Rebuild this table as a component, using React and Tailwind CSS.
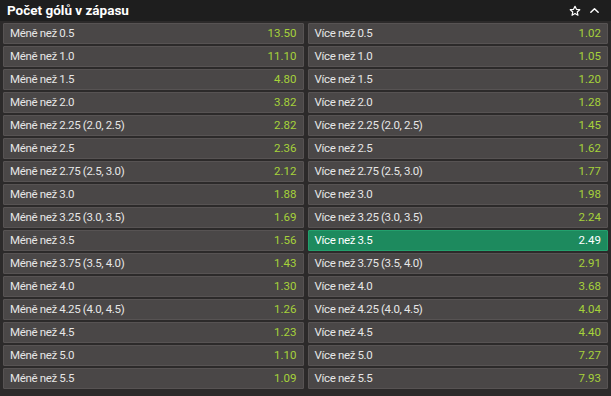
import React from "react";

const rows = [
  ["0.5", "13.50", "1.02"],
  ["1.0", "11.10", "1.05"],
  ["1.5", "4.80", "1.20"],
  ["2.0", "3.82", "1.28"],
  ["2.25 (2.0, 2.5)", "2.82", "1.45"],
  ["2.5", "2.36", "1.62"],
  ["2.75 (2.5, 3.0)", "2.12", "1.77"],
  ["3.0", "1.88", "1.98"],
  ["3.25 (3.0, 3.5)", "1.69", "2.24"],
  ["3.5", "1.56", "2.49"],
  ["3.75 (3.5, 4.0)", "1.43", "2.91"],
  ["4.0", "1.30", "3.68"],
  ["4.25 (4.0, 4.5)", "1.26", "4.04"],
  ["4.5", "1.23", "4.40"],
  ["5.0", "1.10", "7.27"],
  ["5.5", "1.09", "7.93"],
];

const Cell = ({ label, odd, active }) => (
  <div
    className={`flex h-[21px] items-center justify-between rounded-[1px] border px-[6px] text-[11.5px] ${
      active
        ? "border-[#23a06d] bg-[#1d8a5e] text-white"
        : "border-[#575353] bg-[#4a4747] text-[#e6e6e6]"
    }`}
  >
    <span className="tracking-[-0.35px]">{label}</span>
    <span className={active ? "text-white" : "text-[#a6d23a]"}>{odd}</span>
  </div>
);

export default function App() {
  return (
    <div
      className="flex h-[396px] w-[611px] flex-col bg-[#2c2a2a]"
      style={{ fontFamily: "Roboto, 'Liberation Sans', sans-serif" }}
    >
      <div className="flex h-[21px] items-center justify-between bg-[#1e1e1e] pl-[7px] pr-[11px] text-white">
        <span className="text-[13.5px] font-bold">Počet gólů v zápasu</span>
        <div className="flex items-center gap-[8px]">
          <svg width="12" height="12" viewBox="0 0 24 24" fill="none" stroke="white" strokeWidth="2.4" strokeLinejoin="round">
            <path d="M12 2.5l2.9 6.2 6.6.7-5 4.5 1.4 6.6L12 17.2l-5.9 3.3 1.4-6.6-5-4.5 6.6-.7z" />
          </svg>
          <svg width="11" height="11" viewBox="0 0 24 24" fill="none" stroke="white" strokeWidth="3.2" strokeLinecap="round" strokeLinejoin="round">
            <path d="M4 16l8-8 8 8" />
          </svg>
        </div>
      </div>
      <div className="grid grid-cols-2 gap-x-[4px] gap-y-[2px] px-[3px] pt-[2px]">
        {rows.map(([line, under, over]) => (
          <React.Fragment key={line}>
            <Cell label={`Méně než ${line}`} odd={under} />
            <Cell label={`Více než ${line}`} odd={over} active={line === "3.5"} />
          </React.Fragment>
        ))}
      </div>
    </div>
  );
}
